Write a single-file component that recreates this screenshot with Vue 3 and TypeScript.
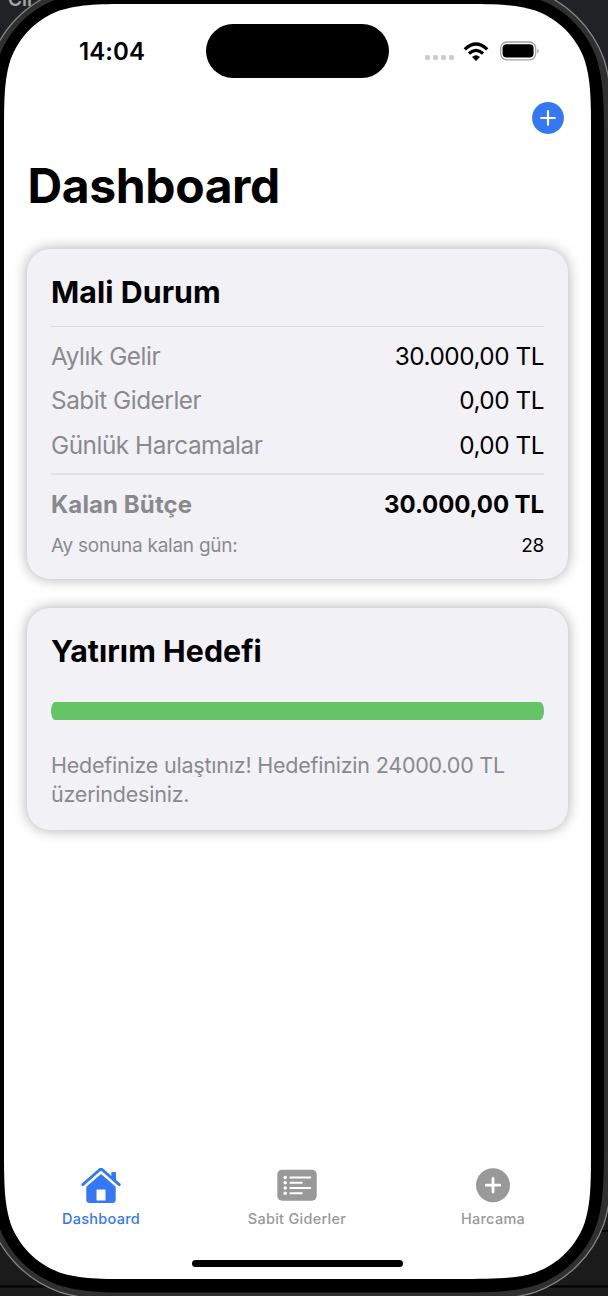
<script setup lang="ts">
interface BudgetRow {
  label: string
  value: string
}

const income: BudgetRow[] = [
  { label: 'Aylık Gelir', value: '30.000,00 TL' },
  { label: 'Sabit Giderler', value: '0,00 TL' },
  { label: 'Günlük Harcamalar', value: '0,00 TL' },
]
const progress = 100

// Continuous-corner rectangle, as used by the phone's display and frame.
function squircle(x: number, y: number, w: number, h: number, r: number): string {
  const turn: [number, number][] = [
    [1.08849, 0], [0.86841, 0], [0.63149, 0.07491],
    [0.37282, 0.16906], [0.16906, 0.37282], [0.07491, 0.63149],
    [0, 0.86841], [0, 1.08849], [0, 1.52866],
  ]
  // The point list is symmetric, so a swapped corner mirrors each pair.
  const corner = (cx: number, cy: number, sx: number, sy: number, swap: boolean): string =>
    'C' + turn
      .map(([a, b]) => (swap ? [b, a] : [a, b]))
      .map(([a, b]) => `${(cx + sx * a * r).toFixed(2)} ${(cy + sy * b * r).toFixed(2)}`)
      .join(' ')
  const e = 1.52866 * r
  return [
    `M${x + w - e} ${y}`,
    corner(x + w, y, -1, 1, false),
    `L${x + w} ${y + h - e}`,
    corner(x + w, y + h, -1, -1, true),
    `L${x + e} ${y + h}`,
    corner(x, y + h, 1, -1, false),
    `L${x} ${y + e}`,
    corner(x, y, 1, 1, true),
    'Z',
  ].join(' ')
}

const outer = squircle(-18, -18, 631, 1319, 122)
const bezel = squircle(-9, -9, 613, 1301.5, 105)
const display = squircle(4, 4, 587, 1275, 88)
</script>

<template>
  <div class="stage">
    <span class="behind">Cir</span>
    <svg class="frame" viewBox="0 0 608 1296" aria-hidden="true">
      <path d="M0 1286.5H608" stroke="#000" stroke-width="2" />
      <path d="M600 1231H608" stroke="#000" stroke-width="2" />
      <path :d="outer" fill="#303030" stroke="#858585" stroke-width="1.3" />
      <path :d="bezel" fill="#000" />
      <path :d="display" fill="#fff" />
    </svg>

    <div class="screen">
      <header class="status">
        <span class="time">14:04</span>
        <div class="island"></div>
        <div class="signals">
          <span class="dots"><i v-for="n in 4" :key="n"></i></span>
          <svg class="wifi" width="26" height="20" viewBox="0 0 26 20">
            <path d="M1.8 7.4Q13 -3.2 24.2 7.4" />
            <path d="M5.9 11.5Q13 5.3 20.1 11.5" />
            <path class="tip" d="M9 15Q13 11.6 17 15L13 19Z" />
          </svg>
          <svg class="battery" width="40" height="20" viewBox="0 0 40 20">
            <rect x=".7" y="1" width="35" height="17.8" rx="6" fill="none" stroke="#a0a0a0" stroke-width="1.3" />
            <rect x="2.6" y="3.2" width="31" height="13.4" rx="4" />
            <path d="M37.4 7.4Q40.5 10 37.4 12.6Z" fill="#a0a0a0" />
          </svg>
        </div>
      </header>

      <nav class="toolbar">
        <svg width="32" height="32" viewBox="0 0 32 32">
          <circle cx="16" cy="16" r="15.9" fill="#3478f6" />
          <path d="M9.2 16H22.8M16 9.2V22.8" stroke="#fff" stroke-width="2.2" stroke-linecap="round" />
        </svg>
      </nav>

      <h1>Dashboard</h1>

      <main>
        <section class="card budget">
          <h2>Mali Durum</h2>
          <div class="rows">
            <div v-for="row in income" :key="row.label" class="row">
              <span class="label">{{ row.label }}</span>
              <span>{{ row.value }}</span>
            </div>
          </div>
          <div class="summary">
            <div class="row total">
              <span class="label">Kalan Bütçe</span>
              <span class="amount">30.000,00 TL</span>
            </div>
            <div class="row note">
              <span class="label">Ay sonuna kalan gün:</span>
              <span>28</span>
            </div>
          </div>
        </section>

        <section class="card goal">
          <h2>Yatırım Hedefi</h2>
          <div class="track"><div class="fill" :style="{ width: progress + '%' }"></div></div>
          <p>Hedefinize ulaştınız! Hedefinizin 24000.00 TL<br />üzerindesiniz.</p>
        </section>
      </main>

      <footer class="tabs">
        <div class="tab active">
          <svg width="40" height="36" viewBox="0 0 40 36">
            <path d="M1.8 16.6L18.4 2Q20 .7 21.6 2L38.2 16.6" fill="none" stroke="currentColor" stroke-width="2.9" stroke-linecap="round" stroke-linejoin="round" />
            <path d="M30.3 5Q30.3 4 31.3 4H34Q35 4 35 5V14L30.3 10Z" fill="currentColor" />
            <path d="M20 6L34.7 18.7V31.7Q34.7 35 31.4 35H8.6Q5.3 35 5.3 31.7V18.7Z" fill="currentColor" />
            <rect x="15.5" y="21.5" width="9" height="11" rx=".5" fill="#fff" />
          </svg>
          <span>Dashboard</span>
        </div>
        <div class="tab">
          <svg width="40" height="36" viewBox="0 0 40 36">
            <rect x=".3" y="1.7" width="39.4" height="31" rx="4.7" fill="currentColor" />
            <g fill="#fff">
              <circle v-for="n in 4" :key="n" cx="8.2" :cy="4.1 + n * 5.3" r="1.75" />
            </g>
            <path d="M13.4 9.4H33.3M13.4 14.7H24.8M13.4 20H33.3M13.4 25.3H24.8" stroke="#fff" stroke-width="2" stroke-linecap="round" />
          </svg>
          <span>Sabit Giderler</span>
        </div>
        <div class="tab">
          <svg width="40" height="36" viewBox="0 0 40 36">
            <circle cx="20" cy="17.2" r="17" fill="currentColor" />
            <path d="M13.2 17.2H26.8M20 10.4V24" stroke="#fff" stroke-width="2.8" stroke-linecap="round" />
          </svg>
          <span>Harcama</span>
        </div>
      </footer>
      <div class="home"></div>
    </div>
  </div>
</template>

<style>
body { margin: 0; background: #1c1c1d; }
</style>

<style scoped>
.stage {
  position: relative;
  width: 608px;
  height: 1296px;
  overflow: hidden;
  background: linear-gradient(#202226, #1b1b1b 60%);
  font-family: Inter, "Liberation Sans", sans-serif;
  color: #000;
}
.behind {
  position: absolute;
  left: 8px;
  top: -11px;
  font-size: 19px;
  font-weight: 600;
  line-height: 22px;
  color: #a5a5a5;
}
.frame { position: absolute; inset: 0; width: 608px; height: 1296px; }
.screen {
  position: relative;
  box-sizing: border-box;
  width: 587px;
  height: 1275px;
  margin-left: 4px;
  top: 4px;
  display: flex;
  flex-direction: column;
}
.status {
  display: grid;
  grid-template-columns: 202px 183px 1fr;
  height: 74px;
  padding-top: 20px;
  box-sizing: border-box;
}
.time {
  padding-left: 75px;
  font-size: 24px;
  font-weight: 600;
  line-height: 56px;
  letter-spacing: .1px;
}
.island { height: 54px; border-radius: 27px; background: #000; }
.signals { display: flex; align-items: flex-start; padding-left: 36px; }
.dots { display: flex; gap: 3px; padding-top: 31px; }
.dots i { width: 5px; height: 5px; border-radius: 1.8px; background: #ccc; }
.wifi { margin: 17.5px 0 0 9.3px; fill: none; stroke: #000; stroke-width: 3.3; }
.wifi .tip { fill: #000; stroke: none; }
.battery { margin: 17px 0 0 10.7px; }
.toolbar { display: flex; justify-content: flex-end; padding: 24px 27px 0 0; }
h1 {
  margin: 19px 0 0 23.6px;
  font-size: 48px;
  line-height: 66px;
  font-weight: 700;
  letter-spacing: -.4px;
}
main { display: flex; flex-direction: column; gap: 29px; padding: 30px 23px 0; }
.card {
  box-sizing: border-box;
  padding: 0 24px;
  border-radius: 23px;
  background: #f2f1f6;
  box-shadow: 0 0 14px rgba(0, 0, 0, .33);
}
.budget { height: 330px; }
.goal { height: 222px; }
h2 {
  margin: 0;
  font-size: 30.3px;
  line-height: 37px;
  padding-top: 25px;
  font-weight: 700;
  letter-spacing: .07px;
}
.rows {
  margin-top: 15px;
  padding: 7px 0 6.1px;
  border-top: 1px solid #dcdbe0;
  border-bottom: 2px solid #e2e1e6;
}
.row {
  display: flex;
  justify-content: space-between;
  font-size: 24.3px;
  line-height: 44.3px;
  letter-spacing: -.45px;
  white-space: nowrap;
}
.label { color: #8a8a8e; }
.summary { padding-top: 8px; }
.total { font-size: 24px; font-weight: 700; letter-spacing: .1px; }
.amount { letter-spacing: -.1px; }
.note { font-size: 19px; line-height: 37px; letter-spacing: -.25px; }
.track { height: 18px; margin-top: 32px; border-radius: 4px / 9px; overflow: hidden; background: #dfdfe4; }
.fill { height: 100%; background: #65c466; }
p {
  margin: 31px 0 0;
  font-size: 21.5px;
  line-height: 29px;
  letter-spacing: -.22px;
  color: #8a8a8e;
  white-space: nowrap;
}
.tabs {
  display: grid;
  grid-template-columns: repeat(3, 196px);
  margin-top: auto;
  margin-left: -1px;
  padding-bottom: 31px;
}
.tab {
  display: flex;
  flex-direction: column;
  align-items: center;
  color: #999;
  font-size: 14.5px;
  font-weight: 500;
  line-height: 20px;
  letter-spacing: .27px;
}
.tab span { margin-top: 5px; }
.tab.active { color: #3478f6; }
.home { align-self: center; width: 211px; height: 7px; margin-bottom: 12px; border-radius: 4px; background: #000; }
</style>
